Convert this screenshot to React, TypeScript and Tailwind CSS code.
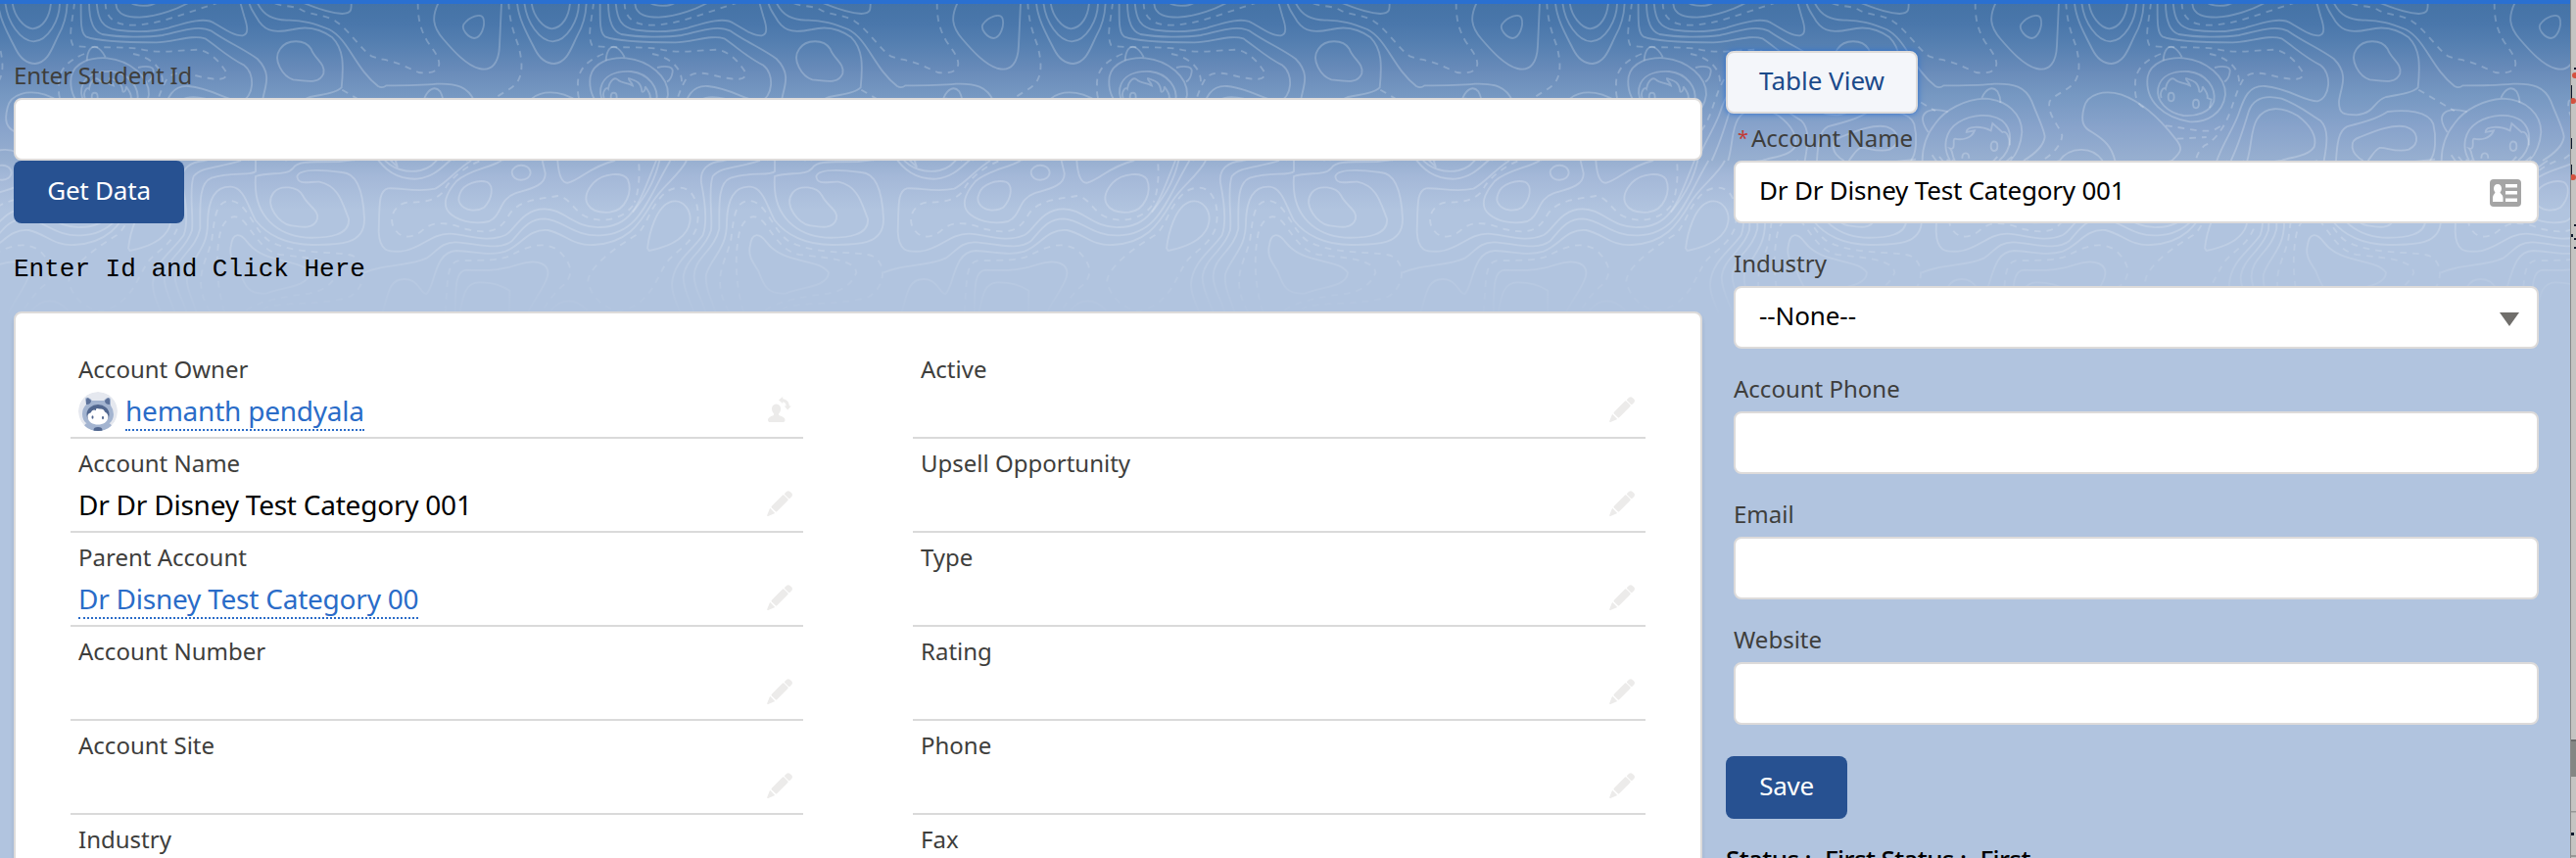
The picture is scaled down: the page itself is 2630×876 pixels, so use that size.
import React from "react";

const solidLines = [
  "M185,8 C165,50 165,80 200,120 C230,155 270,200 310,210 C350,220 370,190 372,140 L378,8",
  "M262,75 C280,50 315,40 322,55 C330,80 315,115 295,117 C275,115 255,90 262,75Z",
  "M470,8 C475,50 505,85 532,88 C565,85 585,50 588,8",
  "M448,8 C455,70 495,125 535,127 C580,125 615,60 615,8",
  "M426,8 C430,60 460,110 480,150 C495,180 515,195 540,195 C580,190 590,150 610,110 C630,75 637,40 638,8",
  "M680,8 C680,60 678,100 695,112 C740,130 860,130 910,130 C960,130 1020,105 1060,118 C1100,145 1130,175 1180,200 C1215,225 1210,300 1170,310 C1130,310 1080,270 1010,264 C960,260 945,300 930,345 C915,390 880,440 862,492 C850,540 835,580 780,650",
  "M705,8 C705,60 715,95 745,105 C800,115 880,115 930,108 C990,95 1040,75 1080,95 C1130,130 1180,150 1220,180 C1270,230 1240,270 1236,310 C1235,350 1250,352 1290,352 C1350,345 1340,310 1380,297 C1420,290 1460,285 1478,268 C1485,200 1485,150 1450,115 C1410,85 1370,80 1330,90 C1280,100 1250,100 1225,65 C1210,40 1200,30 1195,8",
  "M728,8 C732,60 745,85 790,92 C850,100 900,98 950,85 C1000,70 1060,50 1090,72 C1120,90 1150,110 1175,109 C1195,105 1190,80 1180,50 L1168,8",
  "M787,8 C787,50 830,53 860,53 C920,50 980,25 1010,8",
  "M832,8 C850,20 890,22 910,8",
  "M1220,8 C1240,50 1270,60 1310,62 C1360,60 1400,75 1440,90 C1500,120 1520,210 1590,264 C1600,270 1608,268 1615,262 C1690,262 1720,262 1770,257 C1830,255 1865,265 1885,310 C1900,350 1925,400 1925,420 C1920,455 1880,480 1860,492",
  "M1360,8 C1400,25 1450,40 1480,42 C1510,40 1508,30 1508,8",
  "M1290,150 C1310,120 1365,118 1385,150 C1395,180 1430,195 1423,225 C1410,262 1360,245 1330,244 C1300,235 1265,185 1290,150Z",
  "M650,235 C660,190 710,175 760,178 C830,185 890,235 888,290 C880,350 830,375 780,373 C700,360 640,310 650,235Z",
  "M682,270 C690,230 730,217 775,219 C830,225 860,270 853,310 C840,345 800,357 760,354 C710,345 675,310 682,270Z",
  "M692,300 C685,280 700,265 705,272 C710,245 725,235 735,245 C745,255 760,252 780,262 C778,252 765,245 768,240 C790,248 805,250 808,280 C812,285 820,275 818,265 C830,280 835,290 833,300 L845,305 L840,330",
  "M698,185 C700,150 715,140 727,144 C740,150 750,165 755,175",
  "M855,207 C885,200 905,205 902,220 C900,235 895,245 885,250",
  "M713,297 C713,280 731,280 731,297 C731,314 713,314 713,297Z",
  "M789,318 C789,301 807,301 807,318 C807,335 789,335 789,318Z",
  "M455,330 C465,285 520,275 570,290 C640,315 700,380 735,425 C765,460 745,470 725,492",
  "M455,330 C445,370 450,390 480,405 C520,430 540,450 550,492 C553,540 565,562 582,560 C620,550 650,510 725,492",
  "M905,492 C930,440 945,390 960,340 C975,300 1010,290 1060,302 C1110,320 1140,345 1180,370 C1205,395 1200,440 1190,492",
  "M955,492 C970,440 965,400 985,365 C1010,325 1060,325 1110,355 C1150,385 1170,420 1160,450 C1140,480 1090,480 1060,492",
  "M1227,492 C1230,440 1235,400 1260,388 C1310,375 1350,365 1385,342 C1440,335 1510,340 1525,380 C1535,420 1532,470 1515,492",
  "M1310,492 C1270,470 1265,430 1300,420 C1350,400 1400,380 1440,388 C1480,400 1485,440 1450,458 C1410,468 1380,450 1360,453 C1345,460 1335,480 1325,492",
  "M380,492 C410,450 480,445 512,492",
  "M230,492 C250,470 262,440 265,405 C265,350 220,305 150,302 C90,305 30,335 0,378 C-30,415 -40,450 -40,492",
  "M195,492 C235,460 240,400 205,370 C170,345 110,350 70,375 C30,400 20,450 45,492",
  "M60,492 C50,480 55,465 45,455 C65,460 50,425 60,425 C80,430 110,425 120,400 L95,405 C95,385 140,385 170,400 L175,378 L205,405 C215,400 225,410 228,445",
  "M142,300 C155,270 175,263 190,280 C198,295 200,305 199,315",
  "M-22,405 C-60,350 -30,325 38,342",
  "M170,447 C170,428 190,430 190,447 C190,467 170,467 170,447Z",
  "M82,485 C82,464 103,464 103,485",
];

const lowerSolidLines = [
  "M-10,-5 C30,60 80,70 120,68 C180,60 200,25 235,0",
  "M12,0 C40,40 90,50 130,42 C160,35 170,20 190,0",
  "M35,8 L60,32 L52,8",
  "M378,12 C340,35 280,40 240,75 C210,110 190,150 225,178 C260,205 310,205 340,198 C380,180 370,130 420,112 C460,100 515,90 512,50 L503,12",
  "M250,115 C260,80 310,70 335,78 C355,90 350,130 325,155 C300,170 265,165 252,145 C245,135 246,125 250,115Z",
  "M410,48 C412,20 464,18 467,48 C466,78 412,80 410,48Z",
  "M285,12 C240,40 210,80 175,98 C120,110 70,95 30,97 C0,105 5,150 2,230 C5,290 30,292 70,290 C130,285 160,235 220,236 C280,240 330,265 390,240 C420,225 440,160 510,160 C570,160 600,220 680,216 C780,215 800,140 852,12",
  "M-42,355 C-20,346 -10,344 0,342 C50,330 110,330 150,310 C180,290 195,260 240,262 C300,265 370,290 410,258 C440,225 460,190 510,190 C570,195 600,245 680,241 C800,235 820,140 895,12",
  "M12,480 C30,430 30,375 80,375 C125,375 130,420 148,420 C175,400 170,290 240,288 C300,290 340,305 390,290 C440,270 460,220 520,225 C570,235 600,275 660,270 C760,265 800,210 840,140 C870,90 920,60 945,12",
  "M235,480 C240,430 230,350 270,347 C350,350 390,345 430,330 C490,310 530,330 518,370 C505,410 470,445 458,480",
  "M250,480 C260,430 265,385 310,385 C350,385 380,395 403,410 L402,480",
  "M660,80 C690,50 750,45 765,70 C780,105 760,165 710,170 C640,175 615,130 660,80Z",
  "M825,280 C830,240 850,150 900,137 C940,130 960,170 955,200 C945,260 870,280 830,288Z",
  "M1170,12 C1100,35 1050,30 1025,60 C1010,100 1025,180 1020,225 C1000,290 940,310 935,370 C935,410 960,450 970,480",
  "M1060,12 C1010,15 985,40 990,80 C1000,130 1010,200 995,240 C960,290 905,320 900,390 C900,430 920,455 925,480",
  "M1215,12 L1215,45 C1200,60 1140,45 1080,65 C1040,80 1045,150 1045,220 C1030,290 965,310 968,370 C970,410 995,440 1005,480",
  "M1035,480 C1020,430 1000,400 1005,360 C1020,310 1070,280 1068,200 C1070,130 1090,90 1140,92 C1180,95 1190,150 1215,195 C1250,240 1310,270 1390,270 C1470,270 1550,270 1548,190 C1545,120 1530,50 1480,48 C1420,40 1350,35 1342,60 C1345,90 1380,75 1410,77 C1470,90 1480,140 1500,190 C1505,240 1440,250 1370,248 C1290,240 1205,190 1215,60 C1260,45 1310,60 1330,35 C1340,15 1370,15 1470,15 L1530,8",
  "M1270,110 C1290,85 1345,90 1360,120 C1375,150 1410,165 1404,190 C1395,225 1350,215 1320,210 C1290,205 1240,150 1270,110Z",
  "M1140,270 C1145,235 1165,230 1190,262 C1240,330 1350,310 1380,355 C1380,400 1290,400 1250,418 C1190,425 1180,390 1165,350 C1145,320 1132,300 1140,270Z",
  "M530,470 C560,435 600,430 640,470",
];

const dashedLines = [
  "M122,8 C122,60 130,90 150,125 C170,155 185,170 187,195 C185,225 150,225 125,222 C95,210 70,195 40,188 C20,182 0,180 -20,172 C-50,155 -90,90 -130,65 C-160,45 -210,45 -235,30 C-260,15 -300,22 -320,8",
  "M400,8 C402,60 415,100 430,140 C440,180 445,215 430,245 C415,275 370,285 350,310 C340,350 380,385 388,415 C385,450 350,480 320,495",
  "M660,8 C655,60 640,110 655,138 C680,150 800,140 860,150 C920,165 960,155 1040,152 C1080,160 1110,195 1127,225 C1125,250 1090,242 1060,238 C1020,230 970,210 945,240 C925,270 915,310 900,350 C880,400 850,435 825,445 C808,460 800,475 798,492 C805,560 790,610 785,620",
  "M755,8 C755,60 790,78 840,77 C920,75 1000,40 1095,10",
  "M1480,275 L1590,340",
  "M690,165 C640,185 610,215 612,260 C610,290 615,320 640,330",
  "M840,165 C890,175 930,205 930,250",
  "M705,385 C760,390 800,405 850,400 L885,380",
  "M740,425 L830,420",
];

const lowerDashedLines = [
  "M310,14 C270,30 230,60 210,90 C190,135 140,140 90,140 C50,145 30,190 50,220 C70,255 110,250 140,222 C180,190 230,208 270,222 C330,235 370,235 400,180 C430,130 500,130 550,120 C590,125 600,170 640,185 C690,205 750,190 780,150",
  "M205,475 C215,400 205,320 250,318 C320,318 380,318 410,300 C450,280 500,255 550,285 C600,330 600,370 560,400 C530,430 515,450 505,470",
  "M790,240 C740,270 650,330 643,380 C650,430 700,475 750,470 C830,450 850,380 880,330 C905,290 950,280 975,220 C990,160 970,95 925,95 C880,95 860,130 840,160 C820,200 810,225 790,240",
  "M1075,475 C1020,380 1060,330 1080,260 C1090,190 1090,135 1140,135 C1190,140 1210,230 1260,260 C1340,300 1450,290 1500,300 C1560,310 1560,400 1500,430 C1400,460 1300,440 1240,465",
  "M1120,475 C1090,380 1095,290 1105,240 C1115,190 1150,165 1180,200 C1220,250 1240,290 1290,300 C1380,310 1460,315 1465,355 C1440,420 1370,420 1330,425 C1250,440 1200,455 1180,475",
];

function TopographicLines() {
  return (
    <svg className="absolute inset-0" width="2624" height="330" aria-hidden="true">
      <defs>
        <linearGradient id="lineFade" gradientUnits="userSpaceOnUse" x1="0" y1="0" x2="0" y2="975">
          <stop offset="0" stopColor="#fff" stopOpacity="0.22" />
          <stop offset="0.5" stopColor="#fff" stopOpacity="0.22" />
          <stop offset="0.75" stopColor="#fff" stopOpacity="0.18" />
          <stop offset="1" stopColor="#fff" stopOpacity="0" />
        </linearGradient>
        <linearGradient id="lowerLineFade" gradientUnits="userSpaceOnUse" x1="0" y1="-480" x2="0" y2="495">
          <stop offset="0.5" stopColor="#fff" stopOpacity="0.22" />
          <stop offset="0.75" stopColor="#fff" stopOpacity="0.18" />
          <stop offset="1" stopColor="#fff" stopOpacity="0" />
        </linearGradient>
        <g id="contours" fill="none" strokeWidth="5.5">
          <g stroke="url(#lineFade)">
            {solidLines.map((d) => <path key={d} d={d} />)}
            {dashedLines.map((d) => <path key={d} d={d} strokeDasharray="20 18" />)}
          </g>
          <g stroke="url(#lowerLineFade)" transform="translate(0 480)">
            {lowerSolidLines.map((d) => <path key={d} d={d} />)}
            {lowerDashedLines.map((d) => <path key={d} d={d} strokeDasharray="20 18" />)}
          </g>
        </g>
      </defs>
      <g transform="scale(0.333333)">
        {[-2022, -432, 1158, 2748, 4338, 5928, 7518].map((x) => (
          <use key={x} href="#contours" x={x} />
        ))}
      </g>
    </svg>
  );
}

function Pencil() {
  return (
    <svg width="28" height="28" viewBox="0 0 28 28" fill="#ecebea">
      <path d="M4.800 15.800 16 4.600Q16.700 4 17.400 4.600L21.400 8.600Q22 9.300 21.400 10L10.200 21.200Q9.500 21.800 8.800 21.200L4.800 17.200Q4.200 16.500 4.800 15.800Z" />
      <path d="M18.200 2.800 20.200 .8Q22 -.4 23.600 .9L25.300 2.600Q26.600 4.200 25.300 5.900L23.300 7.900Q22.700 8.300 22.200 7.900L18.200 3.900Q17.700 3.300 18.200 2.800Z" />
      <path d="M2.900 18.300Q3.300 17.900 3.700 18.300L7.800 22.400Q8.200 22.900 7.700 23.200L1.200 25.900Q0 26.100 .2 25Z" />
    </svg>
  );
}

function ChangeOwner() {
  return (
    <svg width="28" height="28" viewBox="1 1 28 28" fill="#ecebea">
      <path d="M10.500 8.500c3 0 4.600 2.200 4.600 5 0 2-.9 3.600-1.900 4.700-.5 1.300.1 1.900 1.400 2.400 2.700 1 4.900 2 4.900 4.100 0 1.500-1 2.300-2.300 2.300H4.300C3 27 2 26.200 2 24.700c0-2.100 2.200-3.100 4.600-4.100 1.300-.5 1.900-1.100 1.400-2.400C7 17.100 6 15.500 6 13.500c0-2.800 1.600-5 4.500-5Z" />
      <path d="M13 4.500 17.200 1v2.200c4 .5 6.500 3.300 6.600 7.200h2L22.200 14.500 18.700 10.400h2c-.2-2.300-1.400-3.800-3.500-4.100V8Z" />
    </svg>
  );
}

function Avatar() {
  return (
    <svg width="40" height="40" viewBox="0 0 40 40">
      <clipPath id="avatarClip"><circle cx="20" cy="20" r="20" /></clipPath>
      <g clipPath="url(#avatarClip)">
        <circle cx="20" cy="20" r="20" fill="#e5e8ef" />
        <path d="M4 40 7 33Q14 28 20 31Q26 28 33 33L36 40Z" fill="#a3b4d0" />
        <path d="M7 8Q7 5 10 6Q13 7 14 9H26Q28 6 31 6Q33 6 33 9V14Q36 18 36 23C36 31 29 36 20 36S4 31 4 23Q4 17 8 13Z" fill="#a3b4d0" />
        <path d="M8 8Q9 5 11 7L13 9Q13 13 8 13ZM32 8Q31 5 29 7L27 9Q27 13 32 13Z" fill="#5d729a" />
        <ellipse cx="20" cy="23" rx="11.500" ry="10" fill="#51678f" />
        <path d="M9.500 26Q9 22 12.500 21.500Q14.500 17 18 19Q17 16 22 17.500Q26 17 27 20.500Q30.500 22 30.500 26C29.500 36 10.500 36 9.500 26Z" fill="#fff" />
        <ellipse cx="14.500" cy="26" rx="1" ry="1.800" fill="#51678f" />
        <ellipse cx="25" cy="26.500" rx="1" ry="1.800" fill="#51678f" />
        <ellipse cx="20" cy="39" rx="4.500" ry="3" fill="#51678f" />
      </g>
    </svg>
  );
}

function ContactCard() {
  return (
    <svg className="mt-px" width="32" height="28" viewBox="0 0 32 28">
      <rect width="32" height="28" rx="4" fill="#a5a5a5" />
      <path d="M8 5C10.500 5 12 7 12 9.500C12 11.500 11 12.500 10.500 13.500C11 15 13.500 16 13.500 19V23H3V19C3 16 5 15 5.500 13.500C5 12.500 4 11.500 4 9.500C4 7 5.500 5 8 5Z" fill="#fff" />
      <path d="M16 5H28V8.500H16ZM16 12H28V15.500H16ZM16 19.500H28V23H16Z" fill="#fff" />
    </svg>
  );
}

type Field = { label: string; value?: string; kind?: "owner" | "link" };

const leftFields: Field[] = [
  { label: "Account Owner", value: "hemanth pendyala", kind: "owner" },
  { label: "Account Name", value: "Dr Dr Disney Test Category 001" },
  { label: "Parent Account", value: "Dr Disney Test Category 00", kind: "link" },
  { label: "Account Number" },
  { label: "Account Site" },
  { label: "Industry" },
];

const rightFields: Field[] = ["Active", "Upsell Opportunity", "Type", "Rating", "Phone", "Fax"].map((label) => ({ label }));

function FieldRow({ field }: { field: Field }) {
  const isLink = field.kind !== undefined;
  return (
    <div className="h-24 shrink-0 border-b-2 border-[#dadada] pl-2 pr-[9px] pt-[10px]">
      <div className="h-8 text-[24px] leading-[30px] text-[#3e3e3c]">{field.label}</div>
      <div className="flex h-12 items-start justify-between">
        <div className="flex items-start gap-2 pt-1.5">
          {field.kind === "owner" && <Avatar />}
          {field.value && (
            <span
              className={
                isLink
                  ? "h-10 whitespace-nowrap border-b-2 border-dotted border-[#2a6cc8] text-[28px] leading-[39px] tracking-[-0.23px] text-[#2a6cc8]"
                  : "whitespace-nowrap text-[28px] leading-[39px] tracking-[-0.23px] text-black"
              }
            >
              {field.value}
            </span>
          )}
        </div>
        <div className="pt-[11px]">{field.kind === "owner" ? <ChangeOwner /> : <Pencil />}</div>
      </div>
    </div>
  );
}

function FieldColumn({ fields }: { fields: Field[] }) {
  return (
    <div className="flex w-[748px] flex-col">
      {fields.map((f) => <FieldRow key={f.label} field={f} />)}
    </div>
  );
}

function FormField({ label, required, children }: { label: string; required?: boolean; children?: React.ReactNode }) {
  return (
    <div className="mb-[24px] w-[822px]">
      <div className="flex h-10 text-[24px] leading-[34px] text-[#3e3e3c]">
        {required && <span className="w-[18px] pl-[4px] text-[20px] leading-[34px] text-[#c23934]">*</span>}
        {label}
      </div>
      <div className="flex h-16 items-center justify-between rounded-lg border-2 border-[#dddbda] bg-white pl-6 pr-4 text-[26px] text-black">
        {children}
      </div>
    </div>
  );
}

function WindowEdge() {
  return (
    <div className="flex w-1.5 flex-col border-l border-[#8a8a8a] bg-[#c5c4c2]">
      <svg width="5" height="876" viewBox="0 0 5 876">
        <path d="M0 756H5V793H0Z" fill="#858684" />
        <path d="M0 755H5V757H0Z" fill="#6c6c6c" />
        <path d="M0 828H5V829.500H0ZM0 873H5V875H0Z" fill="#989896" />
        <path d="M3 69H5V71H3ZM0 87H1V102H0ZM0 141H1V152H0ZM0 168H1V180H0ZM0 239H2V242H0ZM3 229H5V231H3ZM3 243H5V245H3ZM3 252H5V254H3ZM0 850H3V853H0Z" fill="#10182c" />
        <circle cx="4" cy="77" r="3" fill="#d5523f" />
        <circle cx="2" cy="103" r="3" fill="#d5523f" />
        <circle cx="2" cy="181" r="3" fill="#d5523f" />
      </svg>
    </div>
  );
}

export default function App() {
  return (
    <div className="flex h-[876px] w-[2630px] overflow-hidden bg-[#b1c4df] font-['Noto_Sans',sans-serif]">
      <div className="relative h-[876px] w-[2624px] overflow-hidden border-t-4 border-[#2a70d1] bg-[linear-gradient(180deg,#4573a6_0px,#4a77ab_21px,#5680b1_42px,#6a8cba_70px,#7698c2_94px,#88a3cb_126px,#97afd0_159px,#a4b8d8_176px,#b1c4df_210px)]">
        <div className="absolute -top-1 left-0"><TopographicLines /></div>
        <div className="relative flex pl-[14px]">
          <div className="flex w-[1724px] flex-col items-start">
            <label className="mt-[54px] h-[42px] text-[24px] leading-[38px] tracking-[-0.12px] text-[#3e3e3c]">Enter Student Id</label>
            <div className="h-16 w-full rounded-lg border-2 border-[#dddbda] bg-white" />
            <button className="h-16 w-[174px] rounded-lg bg-[#275191] pb-[3px] text-[26px] tracking-[-0.2px] text-white">Get Data</button>
            <pre className="mt-[29px] h-[61px] font-['Liberation_Mono',monospace] text-[26px] leading-[36px] text-black">Enter Id and Click Here</pre>
            <div className="flex h-[620px] w-full gap-[112px] rounded-lg border-2 border-[#dddbda] bg-white pl-14 pt-8 shadow-[0_4px_4px_rgba(0,0,0,0.1)]">
              <FieldColumn fields={leftFields} />
              <FieldColumn fields={rightFields} />
            </div>
          </div>
          <div className="ml-6 flex flex-col items-start pt-12">
            <button className="h-16 w-[196px] rounded-lg border-2 border-[#dddbda] bg-[#f4f6fa] pb-[3px] text-[26px] text-[#1b4a8a] shadow-[0_0_6px_#2a70d1]">Table View</button>
            <div className="pl-2 pt-2">
              <FormField label="Account Name" required>
                <span className="pb-[3px] tracking-[-0.2px]">Dr Dr Disney Test Category 001</span>
                <ContactCard />
              </FormField>
              <FormField label="Industry">
                <span className="pb-[3px] tracking-[-0.1px]">--None--</span>
                <svg className="mr-0.5 mt-1" width="20" height="14" viewBox="0 0 20 14"><path d="M0 0H20L10 14Z" fill="#706e6b" /></svg>
              </FormField>
              <FormField label="Account Phone" />
              <FormField label="Email" />
              <FormField label="Website" />
            </div>
            <button className="mt-2 h-16 w-[124px] rounded-lg bg-[#275191] pb-[3px] text-[26px] tracking-[-0.3px] text-white">Save</button>
            <div className="mt-[23px] text-[26px] font-medium leading-9 tracking-[-0.6px] text-black">Status :- First Status :- First</div>
          </div>
        </div>
      </div>
      <WindowEdge />
    </div>
  );
}
